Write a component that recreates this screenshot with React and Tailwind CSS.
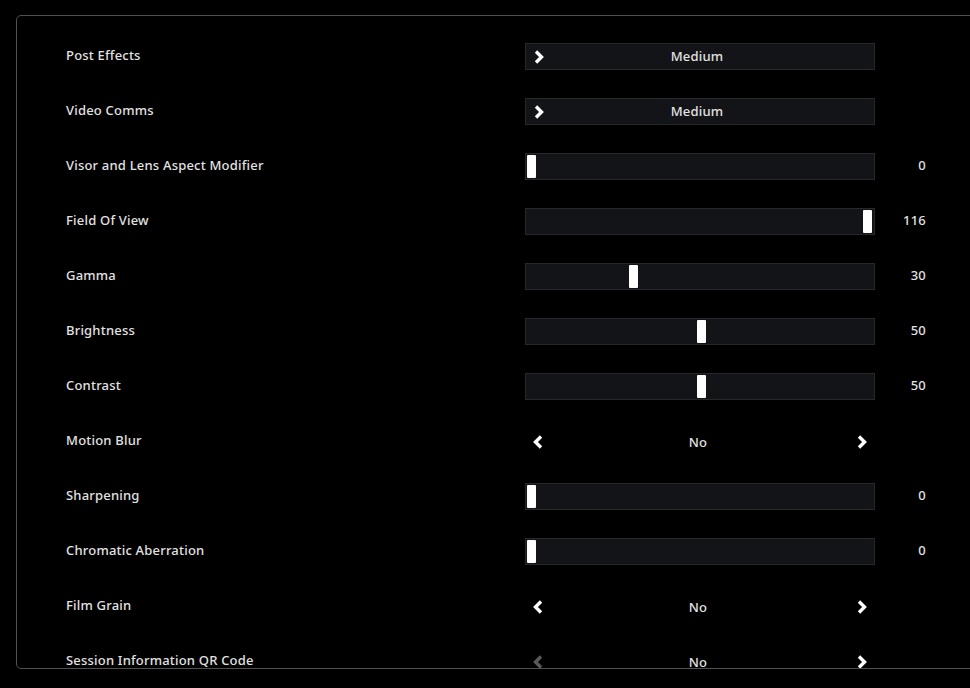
import React from 'react';

const ROWS = [
  { label: 'Post Effects', type: 'dropdown', value: 'Medium' },
  { label: 'Video Comms', type: 'dropdown', value: 'Medium' },
  { label: 'Visor and Lens Aspect Modifier', type: 'slider', pct: 0, value: '0' },
  { label: 'Field Of View', type: 'slider', pct: 99, value: '116' },
  { label: 'Gamma', type: 'slider', pct: 30, value: '30' },
  { label: 'Brightness', type: 'slider', pct: 50, value: '50' },
  { label: 'Contrast', type: 'slider', pct: 50, value: '50' },
  { label: 'Motion Blur', type: 'toggle', value: 'No' },
  { label: 'Sharpening', type: 'slider', pct: 0, value: '0' },
  { label: 'Chromatic Aberration', type: 'slider', pct: 0, value: '0' },
  { label: 'Film Grain', type: 'toggle', value: 'No' },
  { label: 'Session Information QR Code', type: 'toggle', value: 'No', dimLeft: true },
];

function Chevron({ dir = 'right', dim = false }) {
  return (
    <svg width="12" height="16" viewBox="0 0 12 16" className={dim ? 'text-[#5a5a5a]' : 'text-white'}>
      <path
        d={dir === 'right' ? 'M3 2.5l5.5 5.5-5.5 5.5' : 'M9 2.5L3.5 8l5.5 5.5'}
        stroke="currentColor"
        strokeWidth="3.4"
        fill="none"
        strokeLinejoin="miter"
      />
    </svg>
  );
}

function Control({ row }) {
  if (row.type === 'dropdown') {
    return (
      <div className="relative w-[350px] h-[27px] bg-[#131417] border border-[#27282c] flex items-center justify-center">
        <span className="absolute left-[7px] top-[5px]"><Chevron /></span>
        <span className="-ml-[6px]">{row.value}</span>
      </div>
    );
  }
  if (row.type === 'slider') {
    return (
      <div className="relative w-[350px] h-[27px] bg-[#131417] border border-[#27282c]">
        <div
          className="absolute top-[1px] w-[9px] h-[23px] bg-white rounded-[1px]"
          style={{ left: 1 + (row.pct / 100) * 339 }}
        />
      </div>
    );
  }
  return (
    <div className="w-[350px] h-[27px] flex items-center justify-between pl-[7px] pr-[7px]">
      <Chevron dir="left" dim={row.dimLeft} />
      <span className="-ml-[4px] mt-[2px]">{row.value}</span>
      <Chevron />
    </div>
  );
}

export default function App() {
  return (
    <div
      className="w-[970px] h-[688px] bg-black overflow-hidden text-[#e2e2e2] text-[13px] font-medium tracking-[0.2px]"
      style={{ fontFamily: '"Noto Sans", "DejaVu Sans", sans-serif' }}
    >
      <div className="ml-[16px] mt-[15px] w-[1000px] h-[654px] border border-[#505050] rounded-[5px] overflow-hidden pt-[13px]">
        {ROWS.map((row) => (
          <div key={row.label} className="h-[55px] flex items-center pl-[49px]">
            <div className="w-[459px] -mt-[2px]">{row.label}</div>
            <Control row={row} />
            <div className="w-[51px] text-right -mt-[1px]">
              {row.type === 'slider' ? row.value : ''}
            </div>
          </div>
        ))}
      </div>
    </div>
  );
}
